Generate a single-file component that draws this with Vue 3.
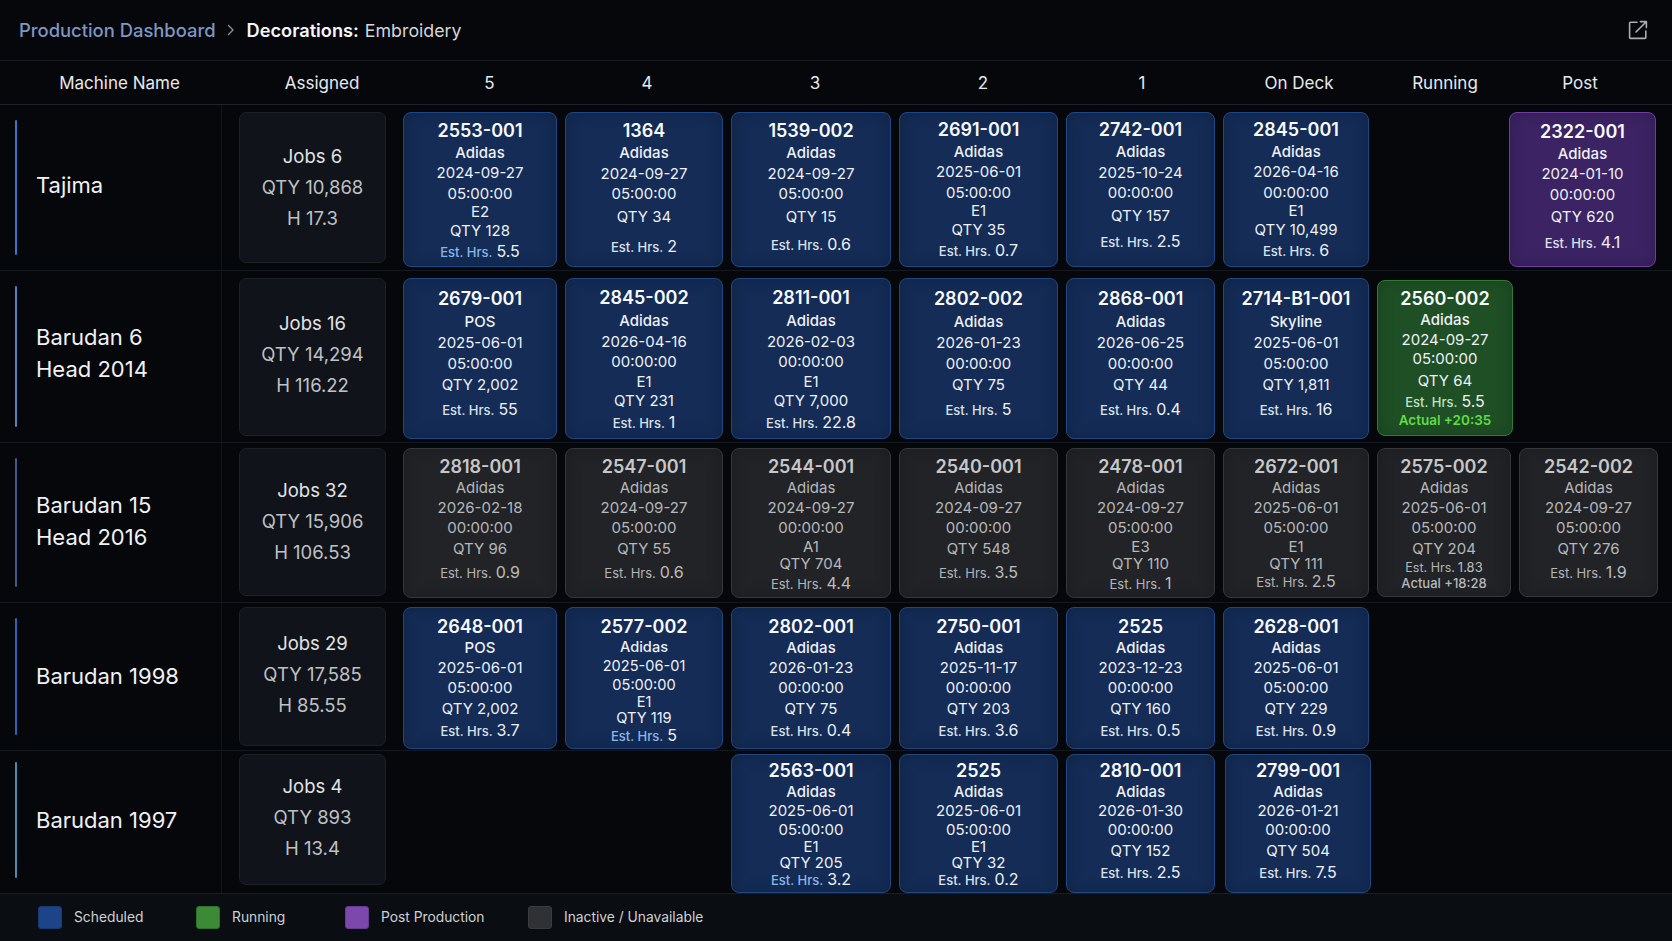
<script setup>
function c(id, client, date, time, qty, est, opts = {}) {
  return { id, client, date, time, qty, est, ...opts }
}

const rows = [
  {
    name: ['Tajima'], jobs: 'Jobs 6', qty: 'QTY 10,868', hours: 'H 17.3', cls: 'r1',
    cards: [
      c('2553-001', 'Adidas', '2024-09-27', '05:00:00', 'QTY 128', '5.5', { fit: 's7', e: 'E2', hot: true }),
      c('1364', 'Adidas', '2024-09-27', '05:00:00', 'QTY 34', '2', { fit: 's6', gap: 7 }),
      c('1539-002', 'Adidas', '2024-09-27', '05:00:00', 'QTY 15', '0.6', { fit: 's6', gap: 5 }),
      c('2691-001', 'Adidas', '2025-06-01', '05:00:00', 'QTY 35', '0.7', { fit: 's7', e: 'E1', top: -1 }),
      c('2742-001', 'Adidas', '2025-10-24', '00:00:00', 'QTY 157', '2.5', { fit: 's6', gap: 3, top: -1 }),
      c('2845-001', 'Adidas', '2026-04-16', '00:00:00', 'QTY 10,499', '6', { fit: 's7', e: 'E1', top: -1 }),
      null,
      c('2322-001', 'Adidas', '2024-01-10', '00:00:00', 'QTY 620', '4.1', { fit: 's6', gap: 3, top: 0.5, kind: 'post', extra: 'post-left' })
    ]
  },
  {
    name: ['Barudan 6', 'Head 2014'], jobs: 'Jobs 16', qty: 'QTY 14,294', hours: 'H 116.22', cls: 'r2',
    cards: [
      c('2679-001', 'POS', '2025-06-01', '05:00:00', 'QTY 2,002', '55', { fit: 'w6', gap: 2.5 }),
      c('2845-002', 'Adidas', '2026-04-16', '00:00:00', 'QTY 231', '1', { fit: 'w7', e: 'E1', gap: 1 }),
      c('2811-001', 'Adidas', '2026-02-03', '00:00:00', 'QTY 7,000', '22.8', { fit: 'w7', e: 'E1', gap: 1 }),
      c('2802-002', 'Adidas', '2026-01-23', '00:00:00', 'QTY 75', '5', { fit: 'w6', gap: 2.5 }),
      c('2868-001', 'Adidas', '2026-06-25', '00:00:00', 'QTY 44', '0.4', { fit: 'w6', gap: 2.5 }),
      c('2714-B1-001', 'Skyline', '2025-06-01', '05:00:00', 'QTY 1,811', '16', { fit: 'w6', gap: 2.5 }),
      c('2560-002', 'Adidas', '2024-09-27', '05:00:00', 'QTY 64', '5.5', { fit: 'run', kind: 'run', extra: 'run-wide', actual: 'Actual +20:35' })
    ]
  },
  {
    name: ['Barudan 15', 'Head 2016'], jobs: 'Jobs 32', qty: 'QTY 15,906', hours: 'H 106.53', cls: 'r3',
    cards: [
      c('2818-001', 'Adidas', '2026-02-18', '00:00:00', 'QTY 96', '0.9', { fit: 'n6', gap: 2, kind: 'off' }),
      c('2547-001', 'Adidas', '2024-09-27', '05:00:00', 'QTY 55', '0.6', { fit: 'n6', gap: 2, kind: 'off' }),
      c('2544-001', 'Adidas', '2024-09-27', '00:00:00', 'QTY 704', '4.4', { fit: 'n7', e: 'A1', kind: 'off' }),
      c('2540-001', 'Adidas', '2024-09-27', '00:00:00', 'QTY 548', '3.5', { fit: 'n6', gap: 2, kind: 'off' }),
      c('2478-001', 'Adidas', '2024-09-27', '05:00:00', 'QTY 110', '1', { fit: 'n7', e: 'E3', kind: 'off' }),
      c('2672-001', 'Adidas', '2025-06-01', '05:00:00', 'QTY 111', '2.5', { fit: 'n7', e: 'E1', gap: -2, kind: 'off' }),
      c('2575-002', 'Adidas', '2025-06-01', '05:00:00', 'QTY 204', '1.83', { fit: 'act', kind: 'off', small: true, actual: 'Actual +18:28' }),
      c('2542-002', 'Adidas', '2024-09-27', '05:00:00', 'QTY 276', '1.9', { fit: 'n6', gap: 2, kind: 'off' })
    ]
  },
  {
    name: ['Barudan 1998'], jobs: 'Jobs 29', qty: 'QTY 17,585', hours: 'H 85.55', cls: 'r4',
    cards: [
      c('2648-001', 'POS', '2025-06-01', '05:00:00', 'QTY 2,002', '3.7', { fit: 'm6' }),
      c('2577-002', 'Adidas', '2025-06-01', '05:00:00', 'QTY 119', '5', { fit: 't7', e: 'E1', hot: true }),
      c('2802-001', 'Adidas', '2026-01-23', '00:00:00', 'QTY 75', '0.4', { fit: 'm6' }),
      c('2750-001', 'Adidas', '2025-11-17', '00:00:00', 'QTY 203', '3.6', { fit: 'm6' }),
      c('2525', 'Adidas', '2023-12-23', '00:00:00', 'QTY 160', '0.5', { fit: 'm6' }),
      c('2628-001', 'Adidas', '2025-06-01', '05:00:00', 'QTY 229', '0.9', { fit: 'm6' })
    ]
  },
  {
    name: ['Barudan 1997'], jobs: 'Jobs 4', qty: 'QTY 893', hours: 'H 13.4', cls: 'r5',
    cards: [
      null,
      null,
      c('2563-001', 'Adidas', '2025-06-01', '05:00:00', 'QTY 205', '3.2', { fit: 'b7', e: 'E1', hot: true }),
      c('2525', 'Adidas', '2025-06-01', '05:00:00', 'QTY 32', '0.2', { fit: 'b7', e: 'E1' }),
      c('2810-001', 'Adidas', '2026-01-30', '00:00:00', 'QTY 152', '2.5', { fit: 'b6' }),
      c('2799-001', 'Adidas', '2026-01-21', '00:00:00', 'QTY 504', '7.5', { fit: 'b6', extra: 'deck-shift' })
    ]
  }
]

const columns = ['Machine Name', 'Assigned', '5', '4', '3', '2', '1', 'On Deck', 'Running', 'Post']
const legend = [
  { label: 'Scheduled', cls: 'sw-blue' },
  { label: 'Running', cls: 'sw-green' },
  { label: 'Post Production', cls: 'sw-purple' },
  { label: 'Inactive / Unavailable', cls: 'sw-gray' }
]
</script>

<template>
  <div class="page">
    <header class="topbar">
      <div class="crumbs">
        <span class="crumb-link">Production Dashboard</span>
        <svg class="chev" width="10" height="14" viewBox="0 0 10 14" fill="none">
          <path d="M2.5 2.5 7 7l-4.5 4.5" stroke="#8b8f96" stroke-width="1.4" stroke-linecap="round" stroke-linejoin="round" />
        </svg>
        <b class="crumb-bold">Decorations:</b>
        <span class="crumb-last">Embroidery</span>
      </div>
      <svg class="open" width="20" height="20" viewBox="0 0 20 20" fill="none">
        <path d="M9 2.2H2.6a1 1 0 0 0-1 1v14.2a1 1 0 0 0 1 1h14.2a1 1 0 0 0 1-1V11" stroke="#a9adb2" stroke-width="1.6" stroke-linecap="round" />
        <path d="M12.4 1.6h6v6M18 2 8 12" stroke="#a9adb2" stroke-width="1.6" stroke-linecap="round" stroke-linejoin="round" />
      </svg>
    </header>

    <div class="colheads">
      <div v-for="col in columns" :key="col">{{ col }}</div>
    </div>

    <section v-for="row in rows" :key="row.jobs" class="row" :class="row.cls">
      <div class="machine">
        <i class="bar"></i>
        <div class="mname">
          <div v-for="line in row.name" :key="line">{{ line }}</div>
        </div>
      </div>
      <div class="assigned">
        <div class="jobs">{{ row.jobs }}</div>
        <div>{{ row.qty }}</div>
        <div>{{ row.hours }}</div>
      </div>
      <div class="slots">
        <template v-for="(card, i) in row.cards" :key="i">
          <div v-if="!card"></div>
          <div v-else class="card" :class="[card.kind || 'sched', card.fit, card.extra]" :style="{ paddingTop: `calc(var(--p) + ${card.top || 0}px)` }">
            <div class="jid">{{ card.id }}</div>
            <div class="ln client">{{ card.client }}</div>
            <div class="ln">{{ card.date }}</div>
            <div class="ln">{{ card.time }}</div>
            <div v-if="card.e" class="eline">{{ card.e }}</div>
            <div class="qline">{{ card.qty }}</div>
            <div class="est" :class="{ small: card.small }" :style="{ marginTop: (card.gap || 0) + 'px' }">
              <span class="est-l" :class="{ hot: card.hot }">Est. Hrs.</span>
              <span class="est-v">{{ card.est }}</span>
            </div>
            <div v-if="card.actual" class="actual">{{ card.actual }}</div>
          </div>
        </template>
      </div>
    </section>

    <footer class="legend">
      <div v-for="item in legend" :key="item.label" class="leg-item">
        <i class="swatch" :class="item.cls"></i>
        <span>{{ item.label }}</span>
      </div>
    </footer>
  </div>
</template>

<style>
html, body {
  margin: 0;
  background: #05070b;
}
</style>

<style scoped>
.page {
  width: 1672px;
  height: 941px;
  overflow: hidden;
  background: #05070b;
  color: #f2f3f5;
  font-family: Inter, "Noto Sans", sans-serif;
}

.topbar {
  height: 61px;
  box-sizing: border-box;
  padding: 0 24px 0 19px;
  display: flex;
  align-items: center;
  justify-content: space-between;
  border-bottom: 1px solid #171c24;
}
.crumbs {
  display: flex;
  align-items: center;
  font-size: 18.4px;
}
.crumb-link { color: #7e96c2; font-weight: 500; }
.chev { margin: 0 11px 0 10px; }
.crumb-bold { font-size: 18.2px; font-weight: 600; color: #f5f6f7; margin-right: 6px; }
.crumb-last { font-size: 17.8px; color: #d4d6d9; }
.open { margin-top: -1px; }

.colheads {
  height: 44px;
  box-sizing: border-box;
  display: grid;
  grid-template-columns: 239px 166px 169px 146px 190px 146px 172px 142px 150px 120px;
  align-items: center;
  text-align: center;
  font-size: 17px;
  color: #e8e9eb;
  border-bottom: 1px solid #1d2229;
}

.row {
  display: flex;
  box-sizing: border-box;
  border-bottom: 1px solid #14181f;
}
.r1 { height: 166px; --t: 7px; --sb: 3px; --ab: 7px; --bar: #3a76c8; --ap: 0px; --nm: 5px; }
.r2 { height: 172px; --t: 7px; --sb: 3px; --ab: 6px; --bar: #5780bd; --ap: 6px; --nm: 7px; }
.r3 { height: 160px; --t: 5px; --sb: 4px; --ab: 6px; --bar: #41598a; --ap: 2px; --nm: 4px; }
.r4 { height: 148px; --t: 4px; --sb: 1px; --ab: 4px; --bar: #2e64b4; --ap: 4px; --nm: 1px; }
.r5 { height: 142px; --t: 3px; --sb: 0px; --ab: 8px; --bar: #4a8cb5; --ap: 4px; --nm: 5px; border-bottom: 0; }

.machine {
  width: 222px;
  box-sizing: border-box;
  padding-left: 15px;
  display: flex;
  align-items: center;
  border-right: 1px solid #12161c;
}
.bar {
  width: 2px;
  align-self: stretch;
  margin: 15px 0;
  background: var(--bar);
  border-radius: 2px;
}
.r5 .bar { margin-top: 11px; }
.mname {
  margin-left: 19px;
  font-size: 22px;
  line-height: 32px;
  color: #f0f1f3;
  margin-bottom: var(--nm);
}

.assigned {
  width: 147px;
  box-sizing: border-box;
  margin: var(--t) 17px var(--ab) 17px;
  background: #10131a;
  border: 1px solid #1c2027;
  border-radius: 7px;
  display: flex;
  flex-direction: column;
  align-items: center;
  justify-content: center;
  padding-bottom: var(--ap);
  font-size: 18.5px;
  line-height: 31px;
  color: #bfc1c4;
}
.jobs { color: #e2e3e5; }

.slots {
  margin: var(--t) 0 var(--sb) 0;
  display: grid;
  grid-template-columns: 154px 158px 160px 159px 149px 146px 134px 139px;
  column-gap: 8px;
}

.card {
  box-sizing: border-box;
  border: 1px solid;
  border-radius: 8px;
  text-align: center;
  overflow: hidden;
  color: #eef1f6;
  font-size: 15px;
  font-weight: 400;
}
.sched {
  background: #142c56;
  border-color: #1f4786;
  box-shadow: inset 0 0 14px #102344;
}
.run {
  background: #1f4f25;
  border-color: #2f7a35;
  box-shadow: inset 0 0 14px #183f1e;
}
.post {
  background: #3c2363;
  border-color: #6b409c;
  box-shadow: inset 0 0 14px #321c54;
}
.off {
  background: #212327;
  border-color: #35373b;
  box-shadow: inset 0 0 14px #1a1c1f;
  color: #b7b8ba;
}

.jid {
  height: var(--tl);
  line-height: var(--tl);
  font-size: 18px;
  font-weight: 600;
  color: #f8f9fb;
}
.off .jid { color: #c6c7c9; }
.ln {
  height: var(--l);
  line-height: var(--l);
}
.client { font-weight: 450; }
.off .client { font-weight: 400; }
.eline {
  height: var(--e);
  line-height: var(--e);
}
.qline {
  height: var(--q);
  line-height: var(--q);
}
.est {
  height: var(--h, 20px);
  line-height: var(--h, 20px);
  font-size: 13px;
  white-space: nowrap;
}
.est-l { font-weight: 500; color: #dde2ea; }
.est-l.hot { color: #88b8ea; }
.run .est-l { color: #bfe3c6; }
.off .est-l { color: #b4b5b7; font-weight: 400; }
.est-v { font-size: 16px; margin-left: 4px; color: #eef1f6; }
.off .est-v { color: #bcbdbf; }
.est.small { font-size: 12.5px; }
.est.small .est-v { font-size: 13px; margin-left: 3px; }
.actual {
  height: 19px;
  line-height: 19px;
  font-size: 13.5px;
  font-weight: 600;
  color: #62dc45;
}
.off .actual { color: #b7b8ba; font-size: 13px; font-weight: 500; height: 17px; line-height: 17px; }

.s6 { --p: 6px; --tl: 24px; --l: 20.5px; --q: 24px; }
.s7 { --p: 6px; --tl: 24px; --l: 20.3px; --e: 16.3px; --q: 21px; }
.w6 { --p: 6.6px; --tl: 25.5px; --l: 21px; --q: 22px; }
.w7 { --p: 6px; --tl: 26px; --l: 20.5px; --e: 18.6px; --q: 19.6px; }
.n6 { --p: 6px; --tl: 23px; --l: 20px; --q: 22px; }
.n7 { --p: 6px; --tl: 23px; --l: 20px; --e: 18px; --q: 16.6px; }
.m6 { --p: 6.6px; --tl: 23px; --l: 20px; --q: 22px; }
.t7 { --p: 6.6px; --tl: 23px; --l: 19px; --e: 15.5px; --q: 16.5px; --h: 16px; font-size: 14.6px; }
.b6 { --p: 3.5px; --tl: 23px; --l: 19px; --q: 23.6px; }
.b7 { --p: 3.5px; --tl: 23px; --l: 19px; --e: 15px; --q: 17px; --h: 16px; }
.run { --p: 6px; --tl: 23px; --l: 19.7px; --q: 23px; --h: 19px; }
.act { --p: 6px; --tl: 23px; --l: 20px; --q: 21px; --h: 16px; }

.post-left { margin: 0 2px 0 -10px; }
.run-wide { margin: 2px -2px 3px 0; }
.deck-shift { margin: 0 -2px 0 2px; }
.r3 .off:nth-child(n+7) { margin-bottom: 1px; }

.legend {
  height: 48px;
  box-sizing: border-box;
  padding: 0 0 1px 38px;
  display: grid;
  grid-template-columns: 158px 149px 183px 200px;
  align-items: center;
  background: #0a0d12;
  border-top: 1px solid #191d24;
  font-size: 13.8px;
  color: #cfd1d4;
}
.leg-item {
  display: flex;
  align-items: center;
  gap: 12px;
}
.swatch {
  width: 24px;
  height: 23px;
  box-sizing: border-box;
  border-radius: 3px;
  border: 1px solid;
}
.sw-blue { background: #1d4388; border-color: #1a3870; }
.sw-green { background: #3d8a36; border-color: #2f702c; }
.sw-purple { background: #7c48ac; border-color: #673b92; }
.sw-gray { background: #2f3135; border-color: #3a3c40; }
</style>
